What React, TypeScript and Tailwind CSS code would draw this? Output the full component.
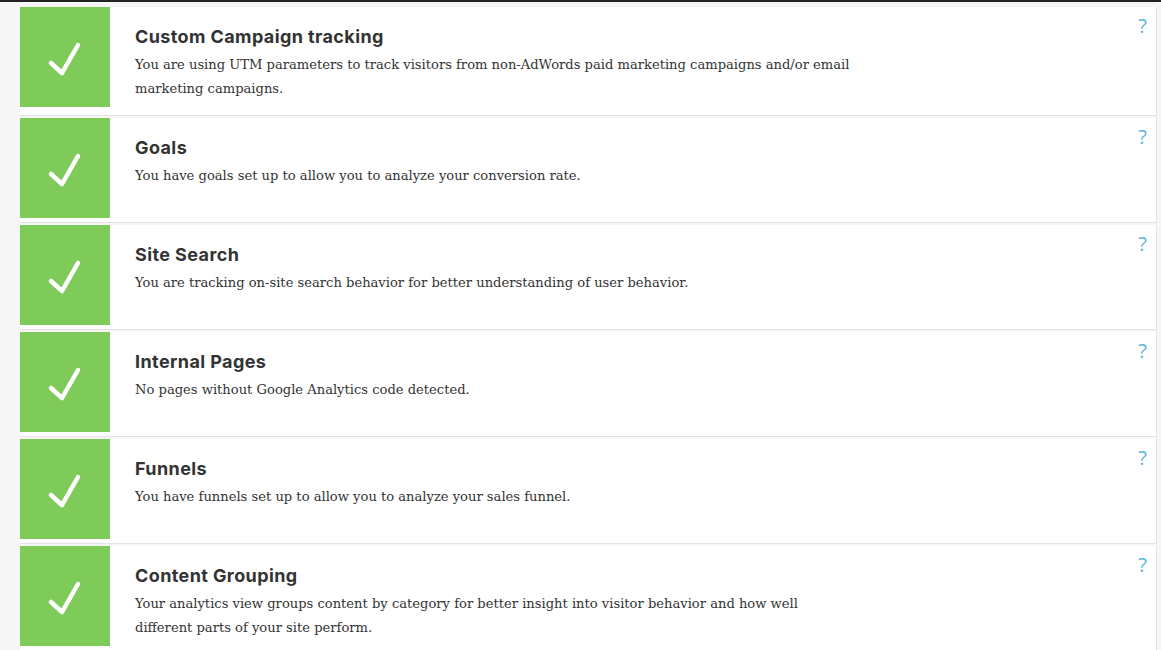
const CHECKS = [
  {
    title: 'Custom Campaign tracking',
    lines: [
      'You are using UTM parameters to track visitors from non-AdWords paid marketing campaigns and/or email',
      'marketing campaigns.',
    ],
  },
  { title: 'Goals', lines: ['You have goals set up to allow you to analyze your conversion rate.'] },
  { title: 'Site Search', lines: ['You are tracking on-site search behavior for better understanding of user behavior.'] },
  { title: 'Internal Pages', lines: ['No pages without Google Analytics code detected.'] },
  { title: 'Funnels', lines: ['You have funnels set up to allow you to analyze your sales funnel.'] },
  {
    title: 'Content Grouping',
    lines: [
      'Your analytics view groups content by category for better insight into visitor behavior and how well',
      'different parts of your site perform.',
    ],
  },
]

function CheckIcon() {
  return (
    <svg width="90" height="100" viewBox="0 0 90 100">
      <path d="M31 56 L42 66 L58 38" fill="none" stroke="#fff" strokeWidth="4.5" strokeLinecap="round" strokeLinejoin="round" />
    </svg>
  )
}

function CheckCard({ title, lines }: { title: string; lines: string[] }) {
  return (
    <div className={`flex shrink-0 bg-white border-r border-b border-[#e4e4e4] ${lines.length > 1 ? 'h-[109px]' : 'h-[105px]'}`}>
      <div className="w-[90px] h-[100px] shrink-0 bg-[#7ecb5a]">
        <CheckIcon />
      </div>
      <div className="flex-1 pl-[25px] pt-[18px]">
        <h3 className="text-[18px] leading-[24px] font-bold tracking-[0.4px] text-[#333]" style={{ fontFamily: 'Inter, sans-serif' }}>
          {title}
        </h3>
        <div className="mt-[4px] text-[13.1px] leading-[23.5px] text-[#333]" style={{ fontFamily: '"DejaVu Serif", serif' }}>
          {lines.map((l, i) => (
            <div key={i} className="whitespace-nowrap">{l}</div>
          ))}
        </div>
      </div>
      <div className="w-[40px] pr-[9px] pt-[7px] text-right text-[20px] leading-[24px] text-[#5ab4e0]" style={{ fontFamily: '"Open Sans", sans-serif' }}>
        ?
      </div>
    </div>
  )
}

export default function App() {
  return (
    <div className="w-[1161px] h-[650px] overflow-hidden bg-[#f7f6f6]">
      <div className="h-[2px] bg-[#222]" />
      <div className="flex flex-col gap-[2px] pl-[20px] pr-[4px] pt-[5px]">
        {CHECKS.map((c) => (
          <CheckCard key={c.title} title={c.title} lines={c.lines} />
        ))}
      </div>
    </div>
  )
}
